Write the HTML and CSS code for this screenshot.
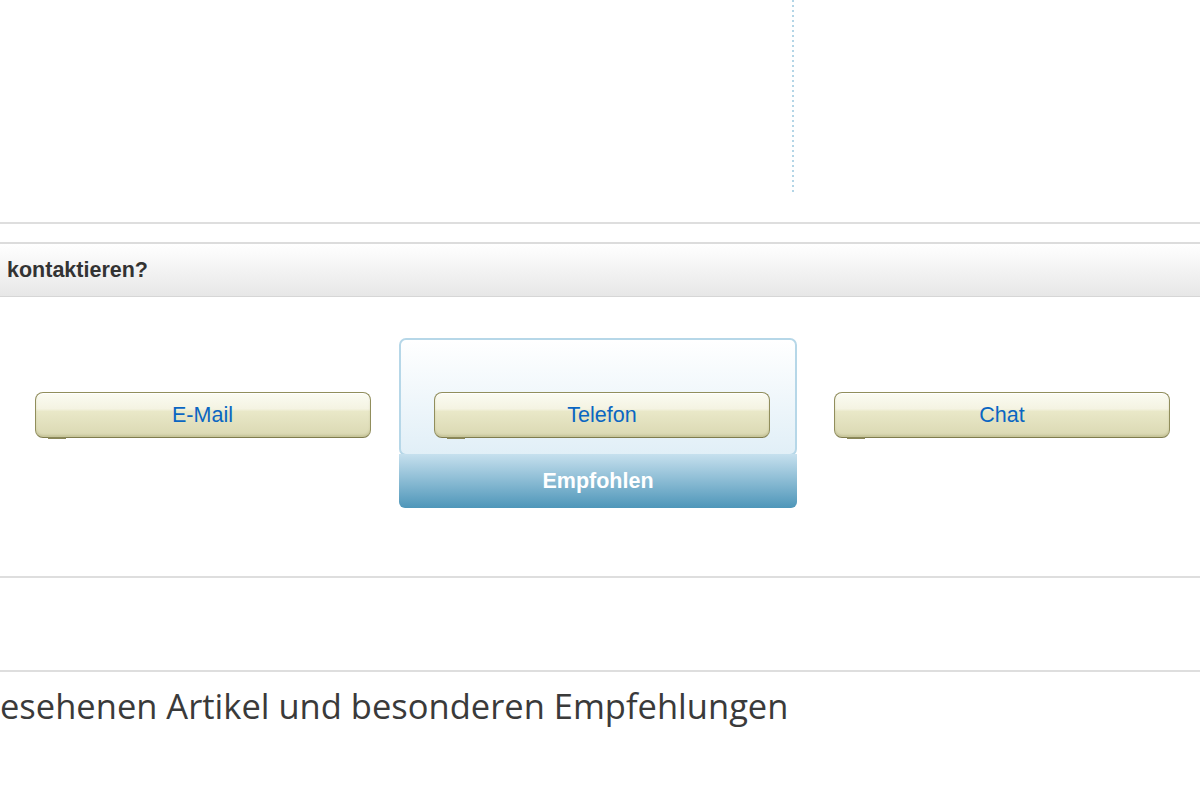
FILE: index.html
```html
<!DOCTYPE html>
<html lang="de">
<head>
<meta charset="utf-8"/>
<title>Kontakt</title>
<link rel="stylesheet" href="styles.css">
</head>
<body>
<div class="top-area">
  <div class="dots"></div>
</div>
<div class="rule"></div>

<div class="contact-head">kontaktieren?</div>

<div class="options">
  <div class="option first">
    <button class="btn" type="button">E-Mail</button>
  </div>
  <div class="option middle">
    <div class="recommended">
      <div class="rec-panel">
        <button class="btn" type="button">Telefon</button>
      </div>
      <div class="rec-label">Empfohlen</div>
    </div>
  </div>
  <div class="option last">
    <button class="btn" type="button">Chat</button>
  </div>
</div>

<div class="rule spacer"></div>
<div class="rule"></div>

<h2 class="history">esehenen Artikel und besonderen Empfehlungen</h2>
</body>
</html>
```

FILE: styles.css
```css
/* Kontaktseite */
body {
    margin: 0;
    font-family: "Liberation Sans", Arial, sans-serif;
    background-color: #fff;
    color: #333;
}

.top-area {
    height: 222px;
}

.dots {
    width: 2px;
    height: 192px;
    margin-left: 792px;
    background: repeating-linear-gradient(to bottom, #b3d5e6 0, #b3d5e6 2px, transparent 2px, transparent 5px);
}

.rule {
    height: 2px;
    background-color: #dedede;
}

.contact-head {
    margin-top: 18px;
    height: 52px;
    line-height: 52px;
    padding-left: 7px;
    border-top: 2px solid #dcdcdc;
    border-bottom: 1px solid #d6d6d6;
    background: linear-gradient(to bottom, #ffffff, #e7e7e7);
    font-size: 21.5px;
    font-weight: bold;
    color: #333;
}

.options {
    display: grid;
    grid-template-columns: 399px 398px 1fr;
    padding: 41px 0 68px;
}

.option {
    display: flex;
    align-items: flex-start;
    padding-top: 54px;
}

.option.first {
    justify-content: center;
    padding-left: 6px;
}

.option.middle {
    padding-top: 0;
}

.option.last {
    padding-left: 37px;
}

.btn {
    position: relative;
    width: 336px;
    height: 46px;
    border: 1px solid #918e5c;
    border-bottom-color: #7f7c4e;
    border-radius: 8px;
    background: linear-gradient(to bottom, #fbfbf2 0%, #f4f3e2 36%, #e9e8c8 42%, #dad8b2 100%);
    box-shadow: inset 0 1px 0 #fff, inset 0 -2px 2px rgba(140, 135, 80, 0.25);
    font-family: "Liberation Sans", Arial, sans-serif;
    font-size: 21.5px;
    color: #0a66c2;
    cursor: pointer;
}

.btn::after {
    content: "";
    position: absolute;
    left: 12px;
    bottom: -2px;
    width: 18px;
    height: 2px;
    background-color: #8a8758;
}

.recommended {
    width: 398px;
}

.rec-panel {
    height: 118px;
    display: flex;
    align-items: flex-start;
    padding: 52px 0 0 33px;
    box-sizing: border-box;
    border: 2px solid #b6d7e8;
    border-radius: 7px;
    background: linear-gradient(to bottom, #ffffff, #e1eff7);
}

.rec-label {
    height: 54px;
    margin-top: -2px;
    line-height: 54px;
    text-align: center;
    border-radius: 0 0 6px 6px;
    background: linear-gradient(to bottom, #c6e0ee, #4e96b9);
    color: #fff;
    font-size: 21.5px;
    font-weight: bold;
}

.spacer {
    margin-bottom: 92px;
}

.history {
    margin: 10px 0 0 0;
    font-family: "Open Sans", "Noto Sans", sans-serif;
    font-size: 34.5px;
    font-weight: normal;
    color: #3a3a3a;
}
```
